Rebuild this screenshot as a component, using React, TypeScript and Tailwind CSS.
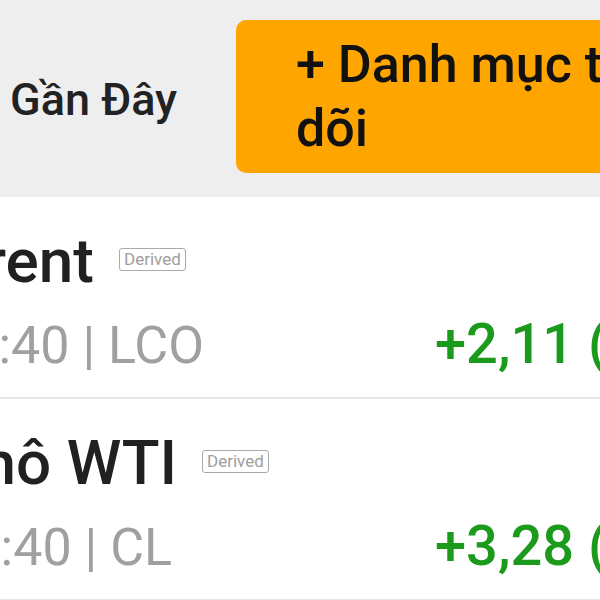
import React from 'react';

type Quote = {
  name: string;
  nameWidth: string;
  time: string;
  code: string;
  metaWidth: string;
  change: string;
};

const quotes: Quote[] = [
  { name: 'Dầu Brent', nameWidth: 'w-[94px]', time: '14:40', code: 'LCO', metaWidth: 'w-[204px]', change: '+2,11 (+2,56%)' },
  { name: 'Dầu thô WTI', nameWidth: 'w-[177px]', time: '14:40', code: 'CL', metaWidth: 'w-[172px]', change: '+3,28 (+4,21%)' },
];

const QuoteRow: React.FC<{ quote: Quote }> = ({ quote }) => (
  <div className="h-[202px] bg-white pt-[33px] border-b-2 border-[#e6e6e6]">
    {/* Title + badge */}
    <div className="flex items-center gap-[25px]">
      <div className={`${quote.nameWidth} flex justify-end overflow-hidden`}>
        <span className="whitespace-nowrap text-[62px] leading-none font-medium text-[#212121]">
          {quote.name}
        </span>
      </div>
      <span className="mb-1 h-[23px] px-[4px] flex items-center border-[1.5px] border-[#aaaaaa] rounded-[3px] text-[17px] leading-none text-[#9e9e9e]">
        Derived
      </span>
    </div>

    {/* Time | code and change */}
    <div className="mt-[24px] flex items-baseline">
      <div className="w-[435px] shrink-0">
        <div className={`${quote.metaWidth} flex justify-end overflow-hidden`}>
          <span className="whitespace-nowrap text-[52px] leading-none text-[#a0a0a0]">
            {quote.time} | {quote.code}
          </span>
        </div>
      </div>
      <span className="whitespace-nowrap text-[56px] leading-none font-medium text-[#1b9a1b]">
        {quote.change}
      </span>
    </div>
  </div>
);

export default function App() {
  return (
    <div
      className="w-[600px] h-[600px] overflow-hidden bg-white"
      style={{ fontFamily: 'Roboto, "Noto Sans", sans-serif' }}
    >
      {/* Header */}
      <div className="h-[197px] bg-[#eeeeee] flex items-start pt-[20px]">
        <div className="w-[236px] shrink-0 h-[153px] flex items-center pl-[10px] pt-[7px]">
          <span className="whitespace-nowrap text-[45px] font-medium text-[#222222]">Gần Đây</span>
        </div>
        <button className="shrink-0 h-[153px] w-[560px] bg-[#ffa500] rounded-[10px] pl-[60px] flex items-center text-left">
          <span className="w-[420px] text-[52px] leading-[64px] font-medium text-[#111111]">
            + Danh mục theo dõi
          </span>
        </button>
      </div>

      {quotes.map((q) => (
        <QuoteRow key={q.code} quote={q} />
      ))}
    </div>
  );
}
